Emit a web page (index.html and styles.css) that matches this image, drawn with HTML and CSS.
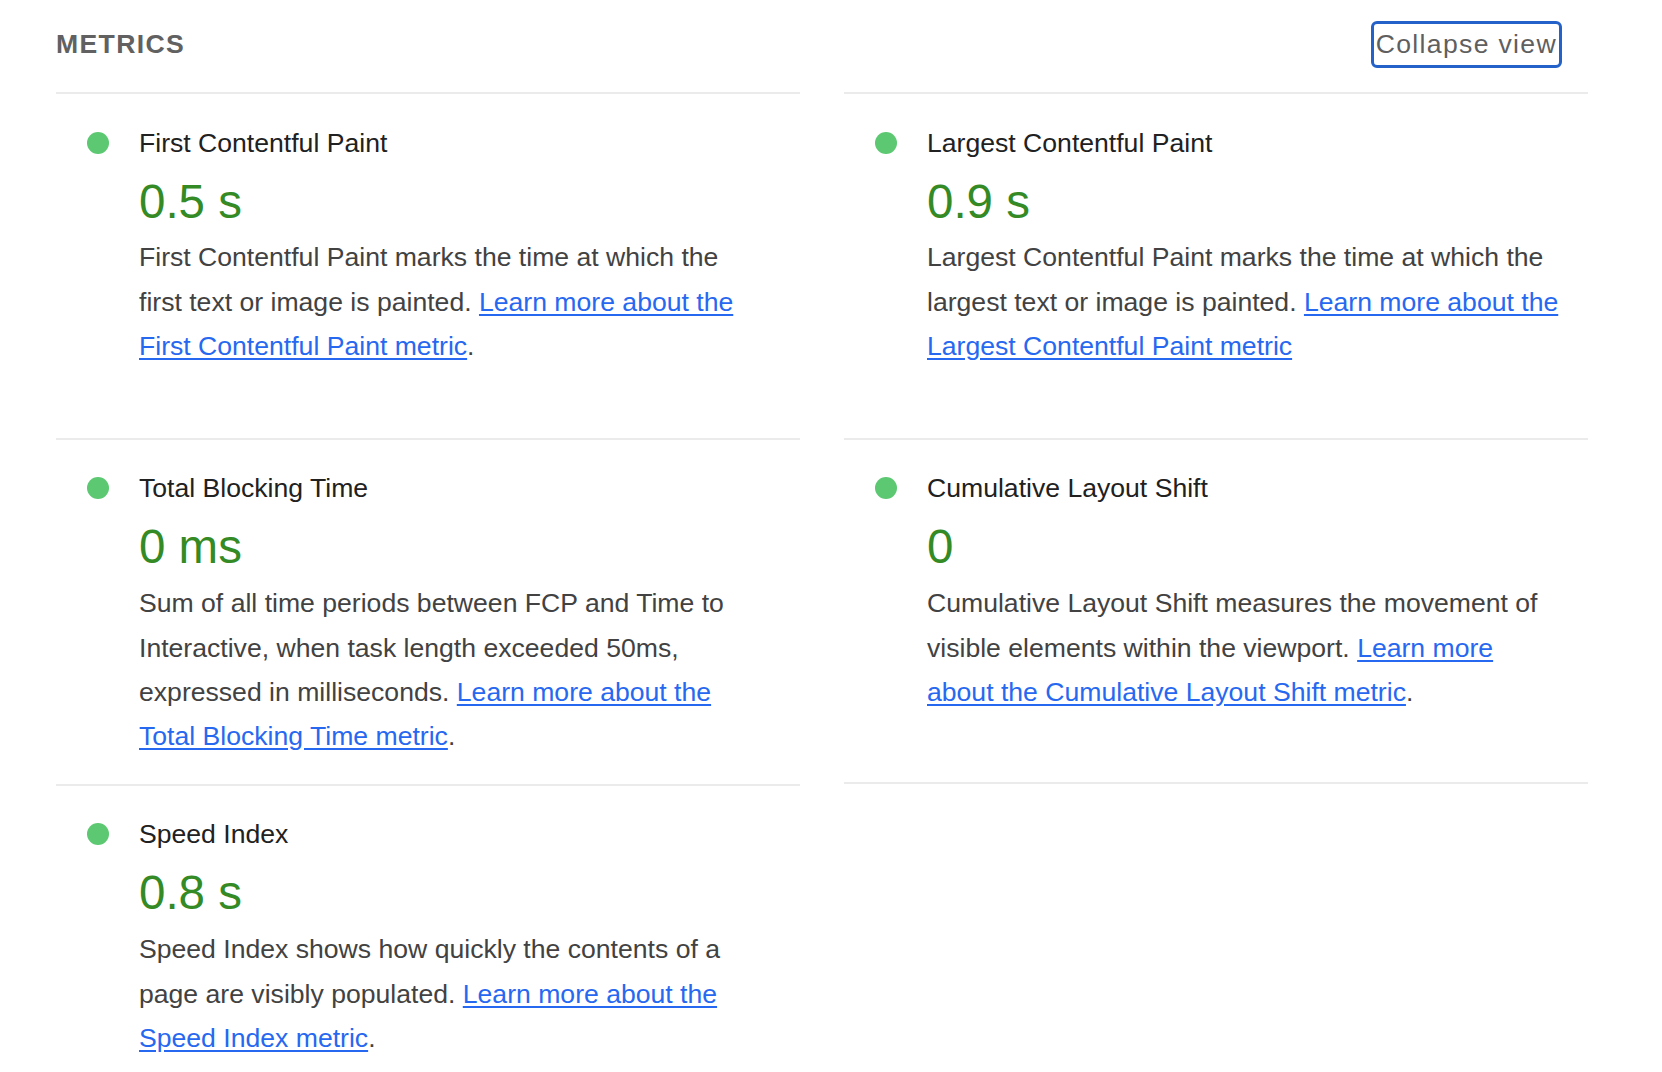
FILE: index.html
```html
<!DOCTYPE html>
<html lang="en">
<head>
<meta charset="utf-8">
<title>Metrics</title>
<link rel="stylesheet" href="styles.css">
</head>
<body>
<section class="metrics">
  <header class="metrics-header">
    <h2 class="metrics-heading">Metrics</h2>
    <button class="collapse-btn" type="button">Collapse view</button>
  </header>
  <div class="metrics-grid">
    <div class="metric">
      <div class="metric-head"><span class="dot"></span><span class="metric-title">First Contentful Paint</span></div>
      <div class="metric-value">0.5 s</div>
      <div class="metric-desc">First Contentful Paint marks the time at which the<br>first text or image is painted. <a href="#">Learn more about the First Contentful Paint metric</a>.</div>
    </div>
    <div class="metric">
      <div class="metric-head"><span class="dot"></span><span class="metric-title">Largest Contentful Paint</span></div>
      <div class="metric-value">0.9 s</div>
      <div class="metric-desc">Largest Contentful Paint marks the time at which the largest text or image is painted. <a href="#">Learn more about the Largest Contentful Paint metric</a></div>
    </div>
    <div class="metric">
      <div class="metric-head"><span class="dot"></span><span class="metric-title">Total Blocking Time</span></div>
      <div class="metric-value">0 ms</div>
      <div class="metric-desc">Sum of all time periods between FCP and Time to Interactive, when task length exceeded 50ms, expressed in milliseconds. <a href="#">Learn more about the Total Blocking Time metric</a>.</div>
    </div>
    <div class="metric metric-last">
      <div class="metric-head"><span class="dot"></span><span class="metric-title">Cumulative Layout Shift</span></div>
      <div class="metric-value">0</div>
      <div class="metric-desc">Cumulative Layout Shift measures the movement of visible elements within the viewport. <a href="#">Learn more about the Cumulative Layout Shift metric</a>.</div>
    </div>
    <div class="metric metric-last">
      <div class="metric-head"><span class="dot"></span><span class="metric-title">Speed Index</span></div>
      <div class="metric-value">0.8 s</div>
      <div class="metric-desc">Speed Index shows how quickly the contents of a page are visibly populated. <a href="#">Learn more about the Speed Index metric</a>.</div>
    </div>
  </div>
</section>
</body>
</html>
```

FILE: styles.css
```css
html, body {
  margin: 0;
  padding: 0;
  background: #ffffff;
}

body {
  font-family: "Liberation Sans", Arial, Helvetica, sans-serif;
  font-size: 26.6px;
  color: #212121;
  padding-left: 56px;
}

.metrics {
  width: 1532px;
}

.metrics-header {
  display: flex;
  align-items: center;
  justify-content: space-between;
  height: 88px;
  margin-bottom: 4px;
  padding-right: 26px;
}

.metrics-heading {
  margin: 0;
  font-size: 26.6px;
  font-weight: 700;
  text-transform: uppercase;
  letter-spacing: 0.05em;
  color: #616161;
  line-height: 30px;
}

.collapse-btn {
  font-family: "Liberation Sans", Arial, Helvetica, sans-serif;
  font-size: 26.6px;
  letter-spacing: 0.05em;
  color: #5f5f5f;
  background: #ffffff;
  border: 3px solid #2461c8;
  border-radius: 6px;
  padding: 0 2px;
  line-height: 41px;
  height: 47px;
  margin: 0;
  cursor: pointer;
}

.metrics-grid {
  display: grid;
  grid-template-columns: 1fr 1fr;
  grid-auto-rows: 1fr;
  column-gap: 44px;
}

.metric {
  border-top: 2px solid #ebebeb;
  padding: 33.5px 0 25px 0;
}

.metric-last {
  border-bottom: 2px solid #ebebeb;
}

.metric-head {
  display: flex;
  align-items: center;
  height: 30px;
}

.dot {
  flex: none;
  width: 22px;
  height: 22px;
  border-radius: 50%;
  background: #5cc872;
  margin-left: 31px;
  margin-right: 30px;
}

.metric-title {
  font-size: 26.6px;
  line-height: 30px;
  color: #212121;
}

.metric-value {
  margin: 16px 0 0 83px;
  font-size: 47.5px;
  line-height: 56px;
  color: #348a24;
}

.metric-desc {
  margin: 5.8px 0 0 83px;
  width: 635px;
  font-size: 26.6px;
  line-height: 44.4px;
  color: #424242;
}

.metric-desc a {
  color: #2768f0;
  text-decoration: underline;
  text-underline-offset: 3px;
}
```
